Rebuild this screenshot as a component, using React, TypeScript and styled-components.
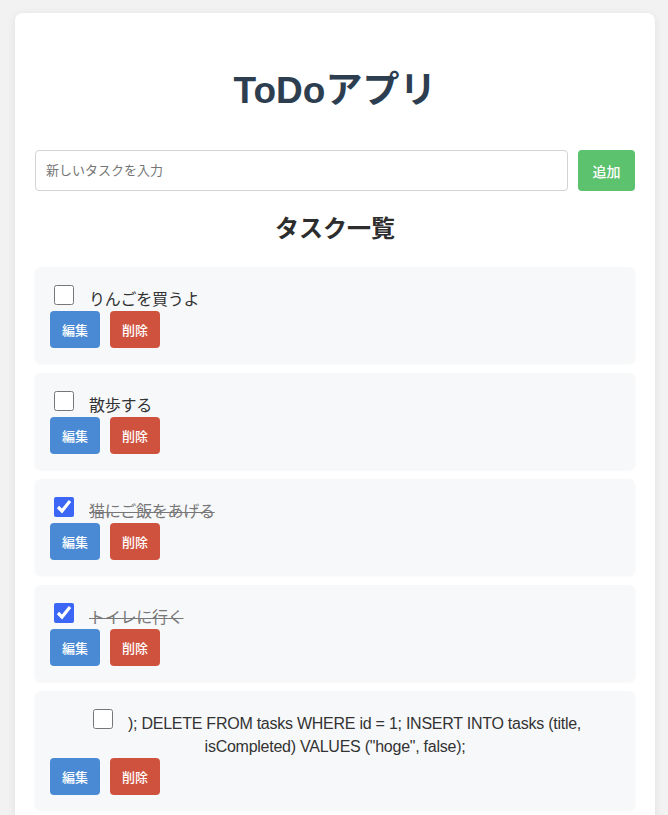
import React, { useState } from "react";
import styled, { createGlobalStyle } from "styled-components";

const GlobalStyle = createGlobalStyle`
  html, body {
    margin: 0;
    padding: 0;
    background: #f2f2f2;
  }
  body {
    font-family: "Helvetica Neue", Helvetica, Arial, "Liberation Sans", "Noto Sans CJK JP", sans-serif;
    color: #333;
  }
  * { box-sizing: border-box; }
`;

const Page = styled.div`
  padding: 13px 13px 0 15px;
`;

const Card = styled.div`
  width: 640px;
  background: #ffffff;
  border-radius: 8px;
  box-shadow: 0 2px 8px rgba(0, 0, 0, 0.08);
  padding: 20px;
  text-align: center;
`;

const Title = styled.h1`
  margin: 36px 0 37px;
  font-size: 37px;
  line-height: 44px;
  font-weight: 700;
  color: #2c3e50;
`;

const InputRow = styled.div`
  display: flex;
  gap: 10px;
  height: 41px;
`;

const TaskInput = styled.input`
  flex: 1;
  height: 41px;
  border: 1px solid #d3d3d3;
  border-radius: 4px;
  padding: 0 10px;
  font-family: inherit;
  font-size: 13px;
  color: #333;
  outline: none;
  &::placeholder {
    color: #757575;
  }
`;

const Button = styled.button<{ $variant: "add" | "edit" | "delete" }>`
  border: none;
  border-radius: 4px;
  color: #fff;
  font-family: inherit;
  font-weight: 500;
  cursor: pointer;
  background: ${(p) =>
    p.$variant === "add" ? "#5cc26d" : p.$variant === "edit" ? "#4a8ad4" : "#cf523e"};
  font-size: ${(p) => (p.$variant === "add" ? "14px" : "13px")};
  height: ${(p) => (p.$variant === "add" ? "41px" : "37px")};
  padding: ${(p) => (p.$variant === "add" ? "0 14.5px" : "0 12px")};
`;

const SectionTitle = styled.h2`
  margin: 22px 0 22px;
  font-size: 24px;
  line-height: 32px;
  font-weight: 700;
  color: #2d2d2d;
`;

const TaskList = styled.ul`
  list-style: none;
  margin: 0;
  padding: 0;
`;

const TaskItem = styled.li`
  display: flex;
  flex-direction: column;
  align-items: flex-start;
  background: #f7f8fa;
  border-radius: 6px;
  box-shadow: 0 1px 3px rgba(0, 0, 0, 0.05);
  padding: 15px;
  margin-bottom: 10px;
`;

const TaskLine = styled.div`
  font-size: 16px;
  line-height: 23px;
  text-align: center;
`;

const Check = styled.input`
  width: 20px;
  height: 20px;
  margin: 3px 3px 0 4px;
  vertical-align: baseline;
  accent-color: #3b66f6;
`;

const TaskText = styled.span<{ $done: boolean }>`
  margin-left: 12px;
  letter-spacing: -0.25px;
  color: ${(p) => (p.$done ? "#777" : "#333")};
  text-decoration: ${(p) => (p.$done ? "line-through" : "none")};
`;

const Actions = styled.div`
  display: flex;
  gap: 10px;
`;

type Task = { id: number; title: string; done: boolean };

const initial: Task[] = [
  { id: 1, title: "りんごを買うよ", done: false },
  { id: 2, title: "散歩する", done: false },
  { id: 3, title: "猫にご飯をあげる", done: true },
  { id: 4, title: "トイレに行く", done: true },
  {
    id: 5,
    title: '); DELETE FROM tasks WHERE id = 1; INSERT INTO tasks (title, isCompleted) VALUES ("hoge", false);',
    done: false,
  },
];

export default function App() {
  const [tasks, setTasks] = useState<Task[]>(initial);
  const [text, setText] = useState("");

  return (
    <Page>
      <GlobalStyle />
      <Card>
        <Title>ToDoアプリ</Title>
        <InputRow>
          <TaskInput
            placeholder="新しいタスクを入力"
            value={text}
            onChange={(e) => setText(e.target.value)}
          />
          <Button $variant="add">追加</Button>
        </InputRow>
        <SectionTitle>タスク一覧</SectionTitle>
        <TaskList>
          {tasks.map((t) => (
            <TaskItem key={t.id}>
              <TaskLine>
                <Check
                  type="checkbox"
                  checked={t.done}
                  onChange={() =>
                    setTasks((prev) =>
                      prev.map((x) => (x.id === t.id ? { ...x, done: !x.done } : x))
                    )
                  }
                />
                <TaskText $done={t.done}>{t.title}</TaskText>
              </TaskLine>
              <Actions>
                <Button $variant="edit">編集</Button>
                <Button $variant="delete">削除</Button>
              </Actions>
            </TaskItem>
          ))}
        </TaskList>
      </Card>
    </Page>
  );
}
